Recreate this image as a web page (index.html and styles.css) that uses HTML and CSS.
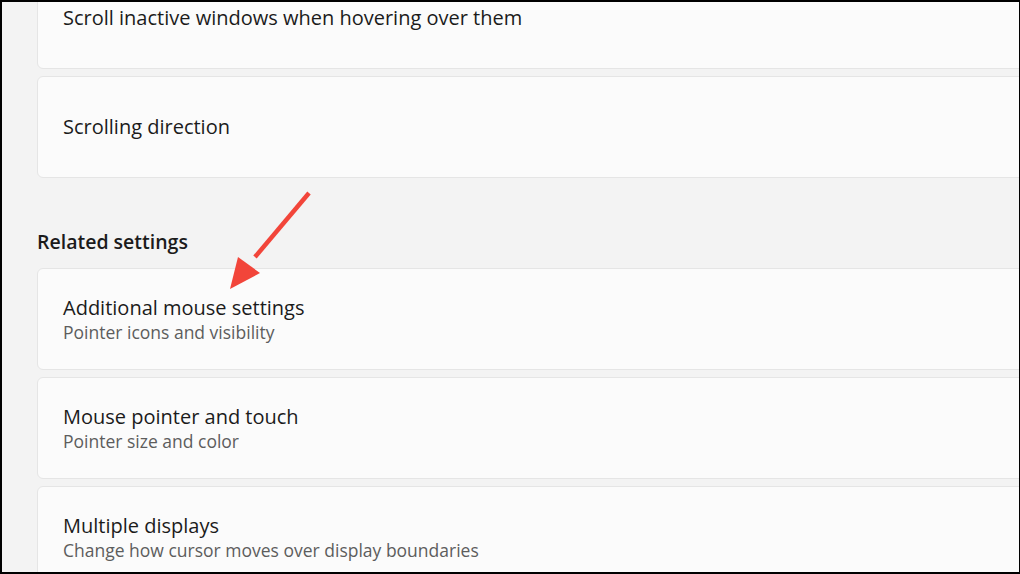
FILE: index.html
```html
<!DOCTYPE html>
<html lang="en">
<head>
  <meta charset="UTF-8">
  <meta name="viewport" content="width=device-width, initial-scale=1.0">
  <title>Mouse settings</title>
  <link rel="stylesheet" href="styles.css">
</head>
<body>
  <div class="frame">
    <div class="page">
      <div class="card">
        <div class="card-title">Scroll inactive windows when hovering over them</div>
      </div>
      <div class="card">
        <div class="card-title">Scrolling direction</div>
      </div>

      <h2 class="section-title">Related settings</h2>

      <div class="card">
        <div class="card-title">Additional mouse settings</div>
        <div class="card-sub">Pointer icons and visibility</div>
      </div>
      <div class="card">
        <div class="card-title">Mouse pointer and touch</div>
        <div class="card-sub">Pointer size and color</div>
      </div>
      <div class="card">
        <div class="card-title">Multiple displays</div>
        <div class="card-sub">Change how cursor moves over display boundaries</div>
      </div>
    </div>

    <svg class="arrow" width="100" height="110" viewBox="0 0 100 110">
      <line x1="84" y1="11" x2="30" y2="75" stroke="#f2453a" stroke-width="4.5" stroke-linecap="butt"/>
      <polygon points="5,107 13,75 35,91" fill="#f2453a"/>
    </svg>
  </div>
</body>
</html>
```

FILE: styles.css
```css
html {
  background: #000;
}
body {
  margin: 0;
  height: 100vh;
  padding: 2px 1px 2px 2px;
  box-sizing: border-box;
  font-family: "Open Sans", "Noto Sans", sans-serif;
  color: #1b1b1b;
}
.frame {
  position: relative;
  height: 100%;
  overflow: hidden;
  background: #f3f3f3;
}
.page {
  margin-top: -35px;
  padding-left: 35px;
  margin-right: -20px;
  display: flex;
  flex-direction: column;
  gap: 7px;
}
.card {
  height: 102px;
  box-sizing: border-box;
  background: #fbfbfb;
  border: 1px solid #e5e5e5;
  border-radius: 6px;
  padding: 0 25px;
  display: flex;
  flex-direction: column;
  justify-content: center;
}
.card-title {
  font-size: 20px;
  line-height: 26px;
}
.card-sub {
  font-size: 17.5px;
  line-height: 23px;
  color: #5d5d5d;
}
.section-title {
  margin: 0;
  padding: 44px 0 6px;
  font-size: 19.5px;
  line-height: 26px;
  font-weight: 600;
  color: #1b1b1b;
}
.arrow {
  position: absolute;
  left: 223px;
  top: 180px;
}
```
